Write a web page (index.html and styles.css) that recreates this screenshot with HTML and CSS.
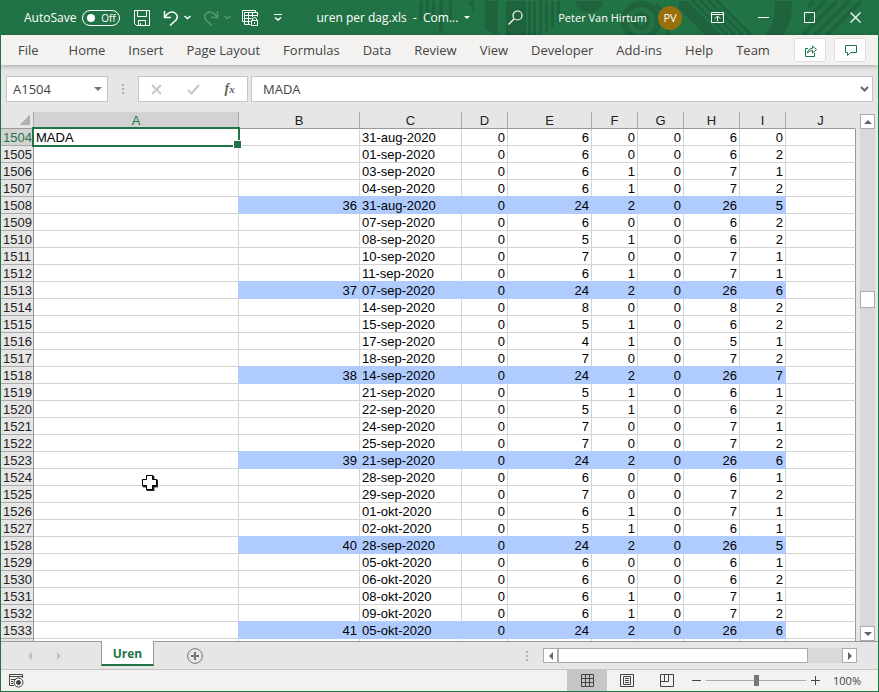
FILE: index.html
```html
<!DOCTYPE html>
<html lang="en">
<head>
    <meta charset="UTF-8">
    <meta name="viewport" content="width=device-width, initial-scale=1.0">
    <title>uren per dag.xls</title>
    <link rel="stylesheet" href="styles.css">
</head>
<body>
    <header class="titlebar">
        <svg class="pattern" width="464" height="35" viewBox="0 0 464 35" aria-hidden="true">
            <g fill="#1f633d">
                <path d="M5 1h4v19h-4zM12 1h3v19h-3zM18 1h3v19h-3zM25 1h4v32h-4zM35 1h3v19h-3z"/>
                <path d="M53 1h7v14q-1-8-7-14zM71 1h13v33q-8-1-13-5zM92 1h20v34h-20z"/>
                <path d="M114 1h3v34h-3zM119 1h3v34h-3zM125 1h3v33h-3zM131 1h3v31h-3zM137 1h3v27h-3zM143 1h3v22h-3z"/>
                <path d="M161 1h28q-3 12-14 12t-14-12z"/>
                <path d="M361 1h17q1 20-9 34h-17q10-14 9-34z"/>
                <path d="M265 1h8l34 34h-16l-26-26z"/>
            </g>
            <g fill="none" stroke="#1f633d">
                <circle cx="227" cy="21" r="17" stroke-width="6"/>
                <circle cx="227" cy="21" r="7" stroke-width="4"/>
                <path stroke-width="3" d="M278 0l35 35M286 0l35 35M294 0l35 35M302 0l35 35M242 4q16 14 11 31"/>
                <path stroke-width="4" d="M394 7l6-6M390 22l21-21M389 35l34-34M401 35l34-34M413 35l34-34"/>
            </g>
        </svg>
        <div class="quick-access">
            <label class="autosave">AutoSave
                <button type="button" class="toggle" role="switch" aria-checked="false"><span class="knob"></span>Off</button>
            </label>
            <button type="button" class="tool save" aria-label="Save">
                <svg width="16" height="16" viewBox="0 0 16 16"><path d="M.5.5h15v15h-13l-2-2zM3.5.5v6h9v-6M4.5 15.5v-5h7v5M6.5 15v-2" /></svg>
            </button>
            <button type="button" class="tool undo" aria-label="Undo">
                <svg width="16" height="16" viewBox="0 0 16 16"><path stroke-width="1.5" d="M1.500 1v6.500h6.500M2 7C5 2 9 1 12 3c3.500 2.500 2.500 6 0 8l-5 4.500"/></svg>
            </button>
            <button type="button" class="tool arrow" aria-label="Undo list">
                <svg width="7" height="5" viewBox="0 0 7 5"><path stroke-width="1.5" d="M.5 1l3 2.500 3-2.500"/></svg>
            </button>
            <button type="button" class="tool redo" aria-label="Redo" disabled>
                <svg width="16" height="16" viewBox="0 0 16 16"><path stroke-width="1.500" d="M14.500 1v6.500h-6.500M14 7C11 2 7 1 4 3c-3.500 2.500-2.500 6 0 8l5 4.500"/></svg>
            </button>
            <button type="button" class="tool arrow" aria-label="Redo list" disabled>
                <svg width="7" height="5" viewBox="0 0 7 5"><path stroke-width="1.5" d="M.5 1l3 2.500 3-2.500"/></svg>
            </button>
            <button type="button" class="tool protect" aria-label="Protect sheet">
                <svg width="16" height="16" viewBox="0 0 16 16"><path d="M2.500 11.500h-2V.5h13v2M2.500 2.500h13v4M2.500 2.500v12h6M2.500 5.500h13M2.500 8.500h7M2.500 11.500h6M6.500 3v11M10.500 3v4M9.500 10.500h6v5h-6zM10.500 10v-1.500q2-2 4 0V10M12.500 12v2"/></svg>
            </button>
            <button type="button" class="tool customize" aria-label="Customize toolbar">
                <svg width="8" height="7" viewBox="0 0 8 7"><path d="M0 .5h8"/><path stroke-width="1.500" d="M1 3.500l3 2.500 3-2.500"/></svg>
            </button>
        </div>
        <button type="button" class="doc-name">uren per dag.xls&nbsp; -&nbsp; Com... <span class="caret"></span></button>
        <button type="button" class="tool search" aria-label="Search">
            <svg width="15" height="15" viewBox="0 0 15 15"><circle cx="9.500" cy="5.500" r="4.500" stroke-width="1.200"/><path stroke-width="1.300" d="M6 9l-5.500 5.500"/></svg>
        </button>
        <div class="account">Peter Van Hirtum <span class="avatar">PV</span></div>
        <div class="window-buttons">
            <button type="button" aria-label="Ribbon display options">
                <svg width="13" height="11" viewBox="0 0 13 11"><path d="M.5.5h12v10h-12zM.5 2.500h12M6.500 9V4.500M4 6.500l2.500-2.500 2.500 2.500"/></svg>
            </button>
            <button type="button" aria-label="Minimize">
                <svg width="11" height="11" viewBox="0 0 11 11"><path d="M0 5.500h11"/></svg>
            </button>
            <button type="button" aria-label="Maximize">
                <svg width="11" height="11" viewBox="0 0 11 11"><path d="M.5.5h10v10h-10z"/></svg>
            </button>
            <button type="button" aria-label="Close">
                <svg width="11" height="11" viewBox="0 0 11 11"><path stroke-width="1.200" d="M.5.5l10 10M10.500.5l-10 10"/></svg>
            </button>
        </div>
    </header>

    <nav class="ribbon">
        <ul>
            <li class="file"><a href="#">File</a></li>
            <li><a href="#">Home</a></li>
            <li><a href="#">Insert</a></li>
            <li><a href="#">Page Layout</a></li>
            <li><a href="#">Formulas</a></li>
            <li><a href="#">Data</a></li>
            <li><a href="#">Review</a></li>
            <li><a href="#">View</a></li>
            <li><a href="#">Developer</a></li>
            <li><a href="#">Add-ins</a></li>
            <li><a href="#">Help</a></li>
            <li><a href="#">Team</a></li>
        </ul>
        <div class="ribbon-buttons">
            <button type="button" aria-label="Share">
                <svg width="13" height="13" viewBox="0 0 13 13"><path d="M4 4.500H1.500v8h9V9M3.500 9q.5-4.500 5-4.500V2l4 3.500-4 3.500V6.500q-3 0-5 2.500z"/></svg>
            </button>
            <button type="button" aria-label="Comments">
                <svg width="13" height="11" viewBox="0 0 13 11"><path d="M1.500.5h11v7h-6l-3 3v-3h-2z"/></svg>
            </button>
        </div>
    </nav>

    <div class="formula-bar">
        <div class="name-box">
            <input type="text" value="A1504" aria-label="Name box">
            <button type="button" aria-label="Names"><span class="caret"></span></button>
        </div>
        <span class="dots"><i></i><i></i><i></i></span>
        <div class="formula-buttons">
            <button type="button" aria-label="Cancel" disabled>
                <svg width="11" height="11" viewBox="0 0 11 11"><path stroke-width="2" d="M1 1l9 9M10 1l-9 9"/></svg>
            </button>
            <button type="button" aria-label="Enter" disabled>
                <svg width="13" height="11" viewBox="0 0 13 11"><path stroke-width="2" d="M1 6l3.500 3.500L12 1"/></svg>
            </button>
            <button type="button" class="fx" aria-label="Insert function">f<small>x</small></button>
        </div>
        <div class="formula-input">
            <input type="text" value="MADA" aria-label="Formula">
            <button type="button" aria-label="Expand formula bar">
                <svg width="9" height="6" viewBox="0 0 9 6"><path stroke-width="2" d="M1 1l3.500 3.500L8 1"/></svg>
            </button>
        </div>
    </div>

    <main class="workspace">
        <div class="grid">
            <table>
                <colgroup>
                    <col class="w-head"><col class="w-a"><col class="w-b"><col class="w-c"><col class="w-small"><col class="w-e">
                    <col class="w-small"><col class="w-small"><col class="w-h"><col class="w-small"><col>
                </colgroup>
                <thead>
                    <tr>
                        <th class="corner" aria-label="Select all"></th>
                        <th class="selected">A</th><th>B</th><th>C</th><th>D</th><th>E</th><th>F</th><th>G</th><th>H</th><th>I</th><th>J</th>
                    </tr>
                </thead>
                <tbody id="rows"></tbody>
            </table>
        </div>
        <div class="scroll-v">
            <button type="button" aria-label="Scroll up"><span class="tri up"></span></button>
            <div class="track"><div class="thumb"></div></div>
            <button type="button" aria-label="Scroll down"><span class="tri down"></span></button>
        </div>
        <svg class="cursor" width="16" height="16" viewBox="0 0 16 16" aria-hidden="true">
            <path fill="#000" d="M5 1h7v4h4v7h-4v4H5v-4H1V5h4z"/>
            <path fill="#fff" stroke="#000" d="M4.500.5h6v4h4v6h-4v4h-6v-4h-4v-6h4z"/>
        </svg>
    </main>

    <div class="sheet-bar">
        <div class="sheet-nav">
            <button type="button" aria-label="Previous sheet" disabled><span class="tri left"></span></button>
            <button type="button" aria-label="Next sheet" disabled><span class="tri right"></span></button>
        </div>
        <a class="sheet-tab" href="#">Uren</a>
        <button type="button" class="add-sheet" aria-label="New sheet">
            <svg width="16" height="16" viewBox="0 0 16 16"><circle cx="8" cy="8" r="7.400"/><path stroke-width="2" d="M8 4v8M4 8h8"/></svg>
        </button>
        <span class="dots"><i></i><i></i><i></i></span>
        <div class="scroll-h">
            <button type="button" aria-label="Scroll left"><span class="tri left"></span></button>
            <div class="track"><div class="thumb"></div></div>
            <button type="button" aria-label="Scroll right"><span class="tri right"></span></button>
        </div>
    </div>

    <footer class="status-bar">
        <button type="button" class="macro" aria-label="Record macro">
            <svg width="15" height="14" viewBox="0 0 15 14"><path d="M5 11.500H.5V.5h13V4M.5 2.500h13M2 5.500h5M2 7.500h2M2 9.500h2"/><circle cx="9.500" cy="8.500" r="4.500"/><circle cx="9.500" cy="8.500" r="2" fill="#444"/></svg>
        </button>
        <div class="views">
            <button type="button" class="active" aria-label="Normal">
                <svg width="13" height="13" viewBox="0 0 13 13"><path d="M.5.5h12v12H.5zM4.500 0v13M8.500 0v13M0 4.500h13M0 8.500h13"/></svg>
            </button>
            <button type="button" aria-label="Page layout">
                <svg width="14" height="13" viewBox="0 0 14 13"><path d="M.5.5h13v12H.5zM3.500 2.500h7v8h-7zM5 4.500h4M5 6.500h4M5 8.500h4"/></svg>
            </button>
            <button type="button" aria-label="Page break preview">
                <svg width="14" height="13" viewBox="0 0 14 13"><path d="M.5.5h13v12H.5zM.5 7.500h8V.5M4.500.5v7"/></svg>
            </button>
        </div>
        <div class="zoom">
            <button type="button" aria-label="Zoom out">
                <svg width="9" height="9" viewBox="0 0 9 9"><path d="M0 4.500h9"/></svg>
            </button>
            <input type="range" min="0" max="200" value="100" aria-label="Zoom">
            <button type="button" aria-label="Zoom in">
                <svg width="9" height="9" viewBox="0 0 9 9"><path d="M0 4.500h9M4.500 0v9"/></svg>
            </button>
            <button type="button" class="percent">100%</button>
        </div>
    </footer>

    <script>
        // B (week), C (date), D, E, F, G, H, I
        const data = [
            ['', '31-aug-2020', 0, 6, 0, 0, 6, 0],
            ['', '01-sep-2020', 0, 6, 0, 0, 6, 2],
            ['', '03-sep-2020', 0, 6, 1, 0, 7, 1],
            ['', '04-sep-2020', 0, 6, 1, 0, 7, 2],
            [36, '31-aug-2020', 0, 24, 2, 0, 26, 5],
            ['', '07-sep-2020', 0, 6, 0, 0, 6, 2],
            ['', '08-sep-2020', 0, 5, 1, 0, 6, 2],
            ['', '10-sep-2020', 0, 7, 0, 0, 7, 1],
            ['', '11-sep-2020', 0, 6, 1, 0, 7, 1],
            [37, '07-sep-2020', 0, 24, 2, 0, 26, 6],
            ['', '14-sep-2020', 0, 8, 0, 0, 8, 2],
            ['', '15-sep-2020', 0, 5, 1, 0, 6, 2],
            ['', '17-sep-2020', 0, 4, 1, 0, 5, 1],
            ['', '18-sep-2020', 0, 7, 0, 0, 7, 2],
            [38, '14-sep-2020', 0, 24, 2, 0, 26, 7],
            ['', '21-sep-2020', 0, 5, 1, 0, 6, 1],
            ['', '22-sep-2020', 0, 5, 1, 0, 6, 2],
            ['', '24-sep-2020', 0, 7, 0, 0, 7, 1],
            ['', '25-sep-2020', 0, 7, 0, 0, 7, 2],
            [39, '21-sep-2020', 0, 24, 2, 0, 26, 6],
            ['', '28-sep-2020', 0, 6, 0, 0, 6, 1],
            ['', '29-sep-2020', 0, 7, 0, 0, 7, 2],
            ['', '01-okt-2020', 0, 6, 1, 0, 7, 1],
            ['', '02-okt-2020', 0, 5, 1, 0, 6, 1],
            [40, '28-sep-2020', 0, 24, 2, 0, 26, 5],
            ['', '05-okt-2020', 0, 6, 0, 0, 6, 1],
            ['', '06-okt-2020', 0, 6, 0, 0, 6, 2],
            ['', '08-okt-2020', 0, 6, 1, 0, 7, 1],
            ['', '09-okt-2020', 0, 6, 1, 0, 7, 2],
            [41, '05-okt-2020', 0, 24, 2, 0, 26, 6],
            ['', '', '', '', '', '', '', '']
        ];
        const firstRow = 1504;

        document.getElementById('rows').innerHTML = data.map((row, i) => {
            const isTotal = row[0] !== '';
            const header = row[1] === '' ? '' : firstRow + i;
            const first = i === 0 ? '<td class="text active-cell">MADA</td>' : '<td></td>';
            const cells = row.map((value, c) => {
                const names = [c === 1 ? 'text' : '', isTotal ? 'fill' : ''].join(' ').trim();
                return `<td class="${names}">${value}</td>`;
            }).join('');
            return `<tr><th class="${i === 0 ? 'selected' : ''}">${header}</th>${first}${cells}<td></td></tr>`;
        }).join('');
    </script>
</body>
</html>
```
FILE: styles.css
```css
* {
    box-sizing: border-box;
}
body {
    margin: 0;
    height: 100vh;
    display: flex;
    flex-direction: column;
    overflow: hidden;
    border: 1px solid #217346;
    border-top: 0;
    background-color: #e6e6e6;
    color: #444;
    font-family: "Open Sans", "Noto Sans", sans-serif;
    font-size: 12px;
}
button {
    display: flex;
    align-items: center;
    justify-content: center;
    padding: 0;
    border: 0;
    background: none;
    color: inherit;
    font: inherit;
}
input {
    min-width: 0;
    padding: 0;
    border: 0;
    background: none;
    color: inherit;
    font: inherit;
}
svg {
    display: block;
    fill: none;
    stroke: currentColor;
}
.caret {
    border: 4px solid transparent;
    border-top-color: currentColor;
    border-bottom: 0;
}

/* title bar */
.titlebar {
    position: relative;
    display: flex;
    align-items: center;
    flex: none;
    height: 35px;
    background-color: #217346;
    color: white;
}
.titlebar > * {
    position: relative;
}
.titlebar .pattern {
    position: absolute;
    top: 0;
    right: 0;
    stroke: none;
}
.quick-access {
    display: flex;
    align-items: center;
    padding-left: 23px;
}
.autosave {
    display: flex;
    align-items: center;
    gap: 6px;
}
.toggle {
    gap: 6px;
    width: 38px;
    height: 16px;
    border: 1px solid white;
    border-radius: 8px;
    font-size: 10px;
}
.knob {
    width: 8px;
    height: 8px;
    border-radius: 50%;
    background-color: white;
}
.tool {
    flex: none;
}
.tool:disabled {
    opacity: 0.25;
}
.save {
    margin-left: 14px;
}
.undo {
    margin-left: 13px;
}
.redo {
    margin-left: 12px;
}
.arrow {
    margin-left: 5px;
}
.protect {
    margin-left: 11px;
}
.customize {
    margin-left: 16px;
}
.doc-name {
    gap: 6px;
    margin-left: 34px;
    white-space: nowrap;
}
.doc-name .caret {
    border-width: 3px;
    border-bottom: 0;
}
.search {
    margin-left: auto;
}
.account {
    display: flex;
    align-items: center;
    gap: 11px;
    margin-left: 35px;
    font-size: 11px;
    white-space: nowrap;
}
.avatar {
    width: 24px;
    height: 24px;
    border-radius: 50%;
    background-color: #986f0b;
    line-height: 24px;
    text-align: center;
}
.window-buttons {
    display: flex;
    margin-left: 12px;
}
.window-buttons button {
    width: 46px;
    height: 35px;
}

/* ribbon tabs */
.ribbon {
    position: relative;
    display: flex;
    align-items: center;
    justify-content: space-between;
    flex: none;
    height: 30px;
    padding-right: 12px;
    background-color: #f3f2f1;
    box-shadow: 0 1px 5px rgba(0, 0, 0, 0.3);
}
.ribbon ul {
    display: flex;
    gap: 23px;
    margin: 0;
    padding: 0 0 0 17px;
    list-style: none;
    font-size: 13px;
}
.ribbon .file {
    margin-right: 7px;
}
.ribbon a {
    color: #444;
    line-height: 30px;
    text-decoration: none;
    white-space: nowrap;
}
.ribbon-buttons {
    display: flex;
    gap: 8px;
}
.ribbon-buttons button {
    width: 32px;
    height: 24px;
    border: 1px solid #e1dfdd;
    border-radius: 2px;
    background-color: white;
    color: #217346;
}

/* formula bar */
.formula-bar {
    display: flex;
    align-items: center;
    flex: none;
    padding: 11px 5px 10px;
    font-size: 13px;
}
.name-box,
.formula-buttons,
.formula-input {
    display: flex;
    align-items: center;
    height: 26px;
    border: 1px solid #c6c6c6;
    background-color: white;
}
.name-box {
    width: 102px;
    padding: 0 5px 0 6px;
}
.name-box input,
.formula-input input {
    flex: 1;
}
.name-box button {
    color: #777;
}
.dots {
    display: flex;
    flex-direction: column;
    gap: 2px;
}
.dots i {
    width: 2px;
    height: 2px;
    background-color: #b0b0b0;
}
.formula-bar .dots {
    margin: 0 14px;
}
.formula-buttons {
    width: 110px;
    justify-content: space-around;
    margin-right: 3px;
    color: #666;
}
.formula-buttons button:disabled {
    color: #c6c6c6;
}
.fx {
    align-items: baseline;
    font: italic bold 14px "Liberation Serif", serif;
}
.fx small {
    font-size: 11px;
}
.formula-input {
    flex: 1;
    padding: 0 3px 0 11px;
}
.formula-input button {
    color: #666;
}

/* worksheet */
.workspace {
    position: relative;
    display: flex;
    flex: 1;
    min-height: 0;
}
.grid {
    flex: 1;
    overflow: hidden;
    background-color: white;
}
.grid table {
    width: 100%;
    border-collapse: separate;
    border-spacing: 0;
    table-layout: fixed;
    color: black;
    font-family: "Liberation Sans", Arial, sans-serif;
    font-size: 13px;
    line-height: 14px;
}
.w-head { width: 33px; }
.w-a { width: 205px; }
.w-b { width: 121px; }
.w-c { width: 102px; }
.w-small { width: 46px; }
.w-e { width: 84px; }
.w-h { width: 56px; }
.grid th,
.grid td {
    height: 17px;
    padding: 2px 2px 0;
    border-right: 1px solid #d4d4d4;
    border-bottom: 1px solid #d4d4d4;
    text-align: right;
    white-space: nowrap;
}
.grid th {
    border-color: #ababab;
    background-color: #e6e6e6;
    color: #222;
    font-weight: normal;
}
.grid thead th {
    border-bottom-color: #999;
    text-align: center;
}
.grid thead th:last-child {
    border-right-color: #e6e6e6;
}
.grid tbody th,
.grid td:last-child {
    border-right-color: #999;
}
.grid .selected {
    background-color: #d2d2d2;
    color: #217346;
}
.grid .corner {
    background: linear-gradient(135deg, transparent 50%, #b0b0b0 50%) right 3px bottom 3px / 10px 10px no-repeat #e6e6e6;
}
.grid .text {
    text-align: left;
}
.grid .fill {
    border-color: #b0ccff;
    background-color: #b0ccff;
    box-shadow: -1px -1px 0 #b0ccff;
}
/* selection frame and its fill handle */
.active-cell {
    position: relative;
}
.active-cell::before {
    content: "";
    position: absolute;
    inset: -2px;
    border: 2px solid #217346;
}
.active-cell::after {
    content: "";
    position: absolute;
    right: -4px;
    bottom: -4px;
    width: 7px;
    height: 7px;
    border: 1px solid white;
    background-color: #217346;
}
.cursor {
    position: absolute;
    left: 141px;
    top: 363px;
}

/* scroll bars */
.scroll-v {
    display: flex;
    flex-direction: column;
    flex: none;
    width: 15px;
    margin: 2px 3px 0 4px;
}
.scroll-v button,
.scroll-h button {
    flex: none;
    width: 15px;
    height: 15px;
    border: 1px solid #ababab;
    background-color: white;
}
.track {
    flex: 1;
    background-color: #d9d9d9;
}
.thumb {
    border: 1px solid #ababab;
    background-color: white;
}
.scroll-v .track {
    padding-top: 162px;
}
.scroll-v .thumb {
    height: 17px;
}
.tri {
    border: 4px solid transparent;
    color: #666;
}
.tri.up { border-bottom-color: currentColor; border-top: 0; }
.tri.down { border-top-color: currentColor; border-bottom: 0; }
.tri.left { border-right-color: currentColor; border-left: 0; }
.tri.right { border-left-color: currentColor; border-right: 0; }

/* sheet tabs */
.sheet-bar {
    display: flex;
    align-items: center;
    flex: none;
    height: 28px;
    padding-right: 21px;
    border-top: 1px solid #999;
}
.sheet-nav {
    display: flex;
    gap: 25px;
    width: 100px;
    padding-left: 27px;
}
.sheet-nav .tri {
    color: #c0c0c0;
}
.sheet-tab {
    align-self: flex-start;
    width: 53px;
    height: 25px;
    margin-top: -1px;
    border: 1px solid #999;
    border-top: 0;
    border-bottom: 2px solid #217346;
    background-color: white;
    color: #217346;
    font-size: 12px;
    font-weight: bold;
    line-height: 25px;
    text-align: center;
    text-decoration: none;
}
.add-sheet {
    margin-left: 33px;
    color: #777;
}
.sheet-bar .dots {
    margin: 0 15px 0 auto;
}
.scroll-h {
    display: flex;
    width: 314px;
}
.scroll-h .track {
    height: 15px;
}
.scroll-h .thumb {
    width: 88%;
    height: 15px;
}

/* status bar */
.status-bar {
    display: flex;
    align-items: stretch;
    flex: none;
    height: 22px;
    border-top: 1px solid #c6c6c6;
    background-color: #f3f2f1;
    font-size: 11px;
}
.macro {
    margin-left: 8px;
}
.views {
    display: flex;
    margin-left: auto;
}
.views button {
    width: 40px;
}
.views .active {
    background-color: #c6c6c6;
}
.zoom {
    display: flex;
    align-items: center;
    gap: 5px;
    margin: 0 17px 0 5px;
}
.zoom input {
    width: 100px;
    height: 12px;
    margin: 0;
    appearance: none;
    background: linear-gradient(#ababab, #ababab) center / 100% 1px no-repeat;
}
.zoom input::-webkit-slider-thumb {
    appearance: none;
    width: 5px;
    height: 11px;
    background-color: #777;
}
.percent {
    margin-left: 8px;
}
```
